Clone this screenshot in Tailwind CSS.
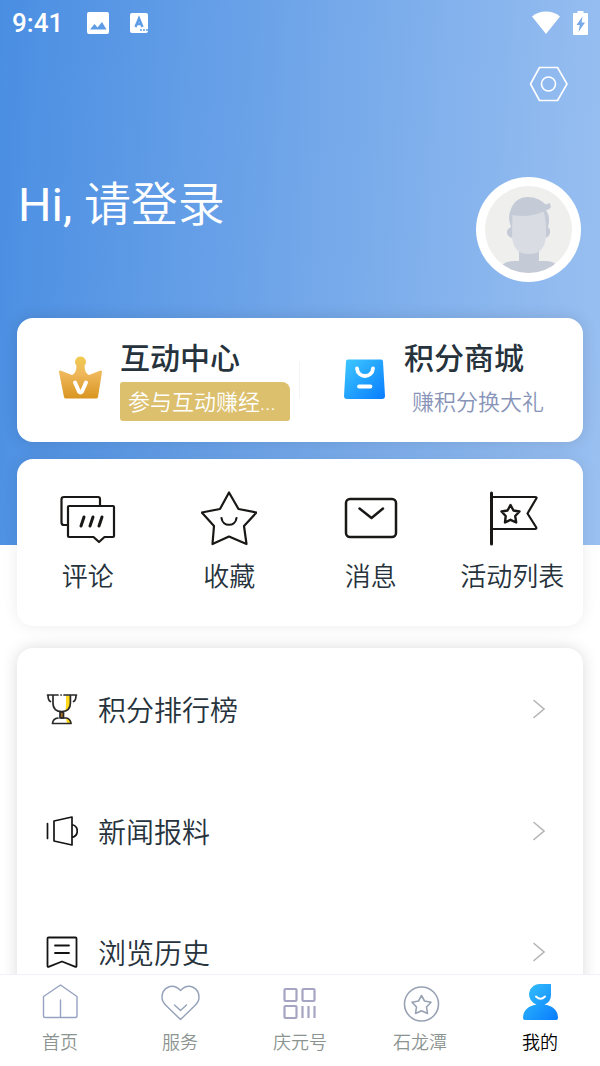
<!DOCTYPE html>
<html lang="zh-CN">
<head>
<meta charset="utf-8">
<meta name="viewport" content="width=device-width, initial-scale=1">
<title>我的</title>
<script src="https://cdn.jsdelivr.net/npm/@tailwindcss/browser@4"></script>
</head>
<body class="flex h-screen flex-col overflow-hidden bg-white font-[Roboto,'Noto_Sans_CJK_SC',sans-serif] font-[350] text-[#26323c]">
<main class="flex min-h-0 flex-1 flex-col overflow-hidden bg-[linear-gradient(94deg,#4a8ee2_0%,#9ac0f1_100%)] bg-[length:100%_545px] bg-no-repeat">
  <div class="flex h-[46px] shrink-0 items-center pl-3 pr-3 text-white">
    <span class="text-[26px] font-medium leading-8">9:41</span>
    <svg class="ml-6 h-[22px] w-[22px]" viewBox="0 0 22 22" fill="none"><rect width="22" height="22" rx="2" fill="#fff"/><path d="M3 17.500 7.500 12l3 3.500 4.500-5.500 4.500 7.500z" fill="#5f9ce6"/></svg>
    <svg class="ml-[21px] h-[22px] w-[19px]" viewBox="0 0 19 22"><rect y="1" width="18" height="20" rx="2" fill="#fff"/><path d="M5.500 15 9 6.500 12.500 15M6.800 12h4.400" fill="none" stroke="#5f9ce6" stroke-width="2.400"/><path d="M10 18h2m1 0h2m1 0h2" stroke="#5f9ce6" stroke-width="1.500"/></svg>
    <svg class="ml-auto h-6 w-[30px]" viewBox="0 0 30 24"><path d="M1 5.500Q7 .5 15 .5t14 5L15 23z" fill="#fff"/></svg>
    <svg class="ml-3 h-6 w-[15px]" viewBox="0 0 15 24"><path d="M4.500 0h6v2H14q1 0 1 1v20q0 1-1 1H1q-1 0-1-1V3q0-1 1-1h3.500z" fill="#fff"/><path d="M9.500 5.500 3.500 14h3.300L5.500 21 12 11.500H8.600z" fill="#78a9e9"/></svg>
  </div>
  <div class="flex h-[76px] shrink-0 items-center justify-end px-8">
    <button type="button" aria-label="设置" class="h-9 w-[39px]"><svg viewBox="0 0 39 36" fill="none" stroke="#fff" stroke-width="1.600" stroke-linejoin="round"><path d="M10.500 1.500h18L38 18l-9.500 16.500h-18L1.500 18z"/><circle cx="19.500" cy="18" r="7"/></svg></button>
  </div>
  <div class="mt-[55px] flex shrink-0 items-start justify-between pl-[18px] pr-[19px]">
    <a href="#login" class="text-[47px] leading-[56px] text-white"><span class="font-normal">Hi, </span>请登录</a>
    <svg class="h-[105px] w-[105px]" viewBox="0 0 105 105" role="img" aria-label="头像">
      <defs><clipPath id="face"><circle cx="52.500" cy="52.500" r="43.500"/></clipPath></defs>
      <circle cx="52.500" cy="52.500" r="52.500" fill="#fff"/><circle cx="52.500" cy="52.500" r="43.500" fill="#efefee"/>
      <g clip-path="url(#face)"><path d="M26 88q5-4 12-4h5V72h20v12h6q8 0 12 4v12H26z" fill="#c5cad7"/>
      <path d="M35 50q-4-10 0-18c3-8 9-12 17-12 7 0 13 3 17 7q2 1 4-1 2 0 1 2l1 1q-1 4-5 4 5 7 2 17c4 3 2 10-3 11H36c-6-1-7-9-1-11z" fill="#c5cad7"/>
      <path d="M36.500 38q17 3 31-3.500 3 8 2.500 24.500-1 18-17 18T36 59z" fill="#d9dde3"/></g>
    </svg>
  </div>
  <div class="mt-9 flex shrink-0 flex-col gap-[17px] px-[17px]">
    <section class="grid h-[124px] grid-cols-2 rounded-2xl bg-white shadow-[0_0_16px_rgba(0,0,0,0.12)]">
      <a href="#interact" class="flex items-center pl-[41px]">
        <svg class="mb-1 h-[46px] w-[46px] shrink-0" viewBox="0 0 46 46"><defs><linearGradient id="gold" x1="0" y1="0" x2="0" y2="1"><stop stop-color="#f0cb50"/><stop offset=".4" stop-color="#efb85b"/><stop offset="1" stop-color="#d99520"/></linearGradient></defs><path d="M22.500 1.500a5.500 5.500 0 0 1 4 9.200q0 7 4.500 9.300l11.500-4.500q1.500-.5 1.500 1.500l-4 25q-.2 1.500-2 1.500H8q-1.800 0-2-1.500L1 17q0-2 1.500-1.500L14 20q4.500-2.300 4.500-9.300a5.500 5.500 0 0 1 4-9.200z" fill="url(#gold)"/><path d="m17 27.500 4 9q1.500 2 3 0l4-9" fill="none" stroke="#fff" stroke-width="4" stroke-linecap="round" stroke-linejoin="round"/></svg>
        <span class="ml-4 flex min-w-0 flex-1 flex-col items-start gap-[5px] pt-0.5">
          <span class="text-[30px] font-medium leading-9">互动中心</span>
          <span class="h-[39px] w-[170px] max-w-full whitespace-nowrap rounded-[3px] rounded-tr-lg bg-[#dcc06e] px-2 text-[22px] leading-[41px] text-white">参与互动赚经...</span>
        </span>
        <span class="h-9 w-px bg-[#f3f3f8]"></span>
      </a>
      <a href="#mall" class="flex items-center pl-[43px]">
        <svg class="mb-0.5 h-[41px] w-[43px] shrink-0" viewBox="0 0 43 41"><defs><linearGradient id="blue" x1="0" y1="0" x2="1" y2="1"><stop stop-color="#3ec9ff"/><stop offset="1" stop-color="#087cff"/></linearGradient></defs><path d="M5 .5h33q2 0 2 2L42 37q0 3-3 3H4q-3 0-3-3L3 2.500q0-2 2-2z" fill="url(#blue)"/><path d="M14 9.500c1 10 15 10 16 0M16 27.500h11.500" fill="none" stroke="#fff" stroke-width="3.800" stroke-linecap="round"/></svg>
        <span class="ml-[18px] flex flex-col gap-[5px] pt-0.5">
          <span class="text-[30px] font-medium leading-9">积分商城</span>
          <span class="h-[39px] pl-2 text-[22px] leading-[41px] text-[#8794b8]">赚积分换大礼</span>
        </span>
      </a>
    </section>
    <section class="grid h-[167px] grid-cols-4 rounded-2xl bg-white text-center text-[26px] leading-8 shadow-[0_0_16px_rgba(0,0,0,0.08)]">
      <a href="#comments" class="flex flex-col items-center whitespace-nowrap pt-8"><svg class="mb-3.5 h-14 w-14" viewBox="0 0 56 56" fill="none" stroke="#191816" stroke-width="2.200" stroke-linejoin="round" stroke-linecap="round"><path d="M8 34H4q-2.500 0-2.500-2.500V8.500Q1.500 6 4 6h34q2 0 2 2v7"/><path d="M9 15h44q1 0 1 1v29q0 1-1 1h-8.500L39 51l-5.500-5H9q-1 0-1-1V16q0-1 1-1z"/><path d="m24 26-3 9m12-9-3 9m12-9-3 9" stroke-width="3"/></svg>评论</a>
      <a href="#favorites" class="flex flex-col items-center whitespace-nowrap pt-8"><svg class="mb-3.5 h-14 w-14" viewBox="0 0 56 56" fill="none" stroke="#191816" stroke-width="2.200" stroke-linejoin="round" stroke-linecap="round"><path d="m28 1.500 9.500 16.500 18 3.500L43 35l2.500 18L28 45.500 11.500 53 13 35 .8 21.500 19 18z"/><path d="M20.500 27c1 9 14 9 15 0"/></svg>收藏</a>
      <a href="#messages" class="flex flex-col items-center whitespace-nowrap pt-8"><svg class="mb-3.5 h-14 w-14" viewBox="0 0 56 56" fill="none" stroke="#191816" stroke-width="2.500" stroke-linejoin="round" stroke-linecap="round"><rect x="3" y="8" width="50" height="38" rx="4"/><path d="m16.500 17.500 12 9.500L40 17.500"/></svg>消息</a>
      <a href="#activities" class="flex flex-col items-center whitespace-nowrap pt-8"><svg class="mb-3.5 h-14 w-14" viewBox="0 0 56 56" fill="none" stroke="#191816" stroke-width="2.200" stroke-linejoin="round" stroke-linecap="round"><path d="M7.500 2v51" stroke-width="3"/><path d="M8 6h43q2.500 0 1 2L43.500 22.500 52 36q1 2-1 2H8"/><path d="m26.500 14 3 5.500 6 1-4.300 4.500 1 6.500-5.700-2.700-5.500 2.700.7-6.500-4.200-4.500 6-1z" stroke-width="2.400"/></svg>活动列表</a>
    </section>
  </div>
  <section class="mx-[17px] mt-[22px] flex h-[420px] shrink-0 flex-col rounded-t-2xl bg-white text-[28px] leading-9 shadow-[0_0_16px_rgba(0,0,0,0.14)]">
    <a href="#ranking" class="flex h-[122px] shrink-0 items-center pl-[29px] pr-[38px]"><svg class="mr-5 h-8 w-8" viewBox="0 0 32 32" fill="none" stroke="#282828" stroke-width="1.700" stroke-linecap="round" stroke-linejoin="round"><path d="M20 2.500h4.500V11q0 6-5.500 7.500 1-3 1-7.500z" fill="#ffd91a" stroke="none"/><path d="M14 19h3.500v6H14z" fill="#a76f20"/><path d="M20 25.500q5 0 5.500 4.500H21z" fill="#ffd91a" stroke="none"/><path d="M1.500 2H12m3 0h.2M18 2h12.500M7 2.500V10c0 6 3.500 8.500 8.700 8.500s8.700-2.500 8.700-8.500V2.500M2 2q0 5.500 2.500 6.500M30 2q0 5.500-2.500 6.500M12 25q-5 .5-5.500 5.500H25q-.5-4.500-4.500-5.500h-5"/></svg><span class="flex-1 pt-1.5">积分排行榜</span><svg class="h-5 w-3" viewBox="0 0 12 20" fill="none" stroke="#b5b5b5" stroke-width="1.600" stroke-linecap="round"><path d="m1 1.500 10 8.500L1 18.500"/></svg></a>
    <a href="#report" class="flex h-[121px] shrink-0 items-center pl-[29px] pr-[38px]"><svg class="mr-5 h-8 w-8" viewBox="0 0 32 32" fill="none" stroke="#141414" stroke-width="1.700" stroke-linecap="round" stroke-linejoin="round"><path d="M1.500 8.500v15M8 6l18-4v28L8 26zM26 9.500c7 2 7 11 0 13"/></svg><span class="flex-1 pt-1.5">新闻报料</span><svg class="h-5 w-3" viewBox="0 0 12 20" fill="none" stroke="#b5b5b5" stroke-width="1.600" stroke-linecap="round"><path d="m1 1.500 10 8.500L1 18.500"/></svg></a>
    <a href="#history" class="flex h-[122px] shrink-0 items-center pl-[29px] pr-[38px]"><svg class="mr-5 h-8 w-8" viewBox="0 0 32 32" fill="none" stroke="#141414" stroke-width="1.800" stroke-linecap="round" stroke-linejoin="round"><path d="M2.500 1.500h27q1 0 1 1V30q0 1-1 .8L16 25.500 2.500 30.800q-1 .2-1-.8V2.500q0-1 1-1zM9 9.500h14M9 17h14"/></svg><span class="flex-1 pt-1.5">浏览历史</span><svg class="h-5 w-3" viewBox="0 0 12 20" fill="none" stroke="#b5b5b5" stroke-width="1.600" stroke-linecap="round"><path d="m1 1.500 10 8.500L1 18.500"/></svg></a>
  </section>
</main>
<nav aria-label="主导航" class="z-10 grid h-[92px] shrink-0 grid-cols-5 border-t border-[#eef1f6] bg-white text-[18px] leading-6 text-[#8b9490]">
  <a href="#home" class="flex flex-col items-center gap-[5px] pt-[7px]"><svg class="h-11 w-10" viewBox="0 0 40 44" fill="none" stroke="#97a2c1" stroke-width="1.400" stroke-linejoin="round" stroke-linecap="round"><path d="M3.500 14.500 20.500 3 37 14.500V34q0 1.500-1.500 1.500H5q-1.500 0-1.500-1.500zM20.500 18v17.500"/></svg><span>首页</span></a>
  <a href="#services" class="flex flex-col items-center gap-[5px] pt-[7px]"><svg class="h-11 w-10" viewBox="0 0 40 44" fill="none" stroke="#94a1b8" stroke-width="1.400" stroke-linejoin="round" stroke-linecap="round"><path d="M20.500 8.500C12 0 2 6 2 15.500q0 4 4 8L20.500 37.500 35 23.500q4-4 4-8C39 6 29 0 20.500 8.500zM14.500 23l6 5.500 6-5.500"/></svg><span>服务</span></a>
  <a href="#qingyuan" class="flex flex-col items-center gap-[5px] pt-[7px]"><svg class="h-11 w-10" viewBox="0 0 40 44" fill="none" stroke="#a5a4c2" stroke-width="2.200"><rect x="4.500" y="7" width="12" height="12" rx="1"/><rect x="22.500" y="7" width="12" height="12" rx="1"/><rect x="4.500" y="24" width="12" height="12" rx="1"/><path d="M22.500 24v12m6-12v12m6-12v12"/></svg><span>庆元号</span></a>
  <a href="#shilongtan" class="flex flex-col items-center gap-[5px] pt-[7px]"><svg class="h-11 w-10" viewBox="0 0 40 44" fill="none" stroke="#98a2b3" stroke-width="1.600" stroke-linejoin="round"><circle cx="21.500" cy="22" r="17"/><path d="m21.500 13.500 3 5.500 6.500 1.200-4.500 4.800 1 6.500-6-2.800-6 2.800 1-6.500-4.500-4.800 6.500-1.200z"/></svg><span>石龙潭</span></a>
  <a href="#me" aria-current="page" class="flex flex-col items-center gap-[5px] pt-[7px] text-black"><svg class="h-11 w-10" viewBox="0 0 40 44"><defs><linearGradient id="user" x1="0" y1="0" x2="1" y2="1"><stop stop-color="#36c3fa"/><stop offset="1" stop-color="#087cff"/></linearGradient></defs><path d="M20.500 2H31v10.500a10.500 10.500 0 0 1-6.500 10Q38 25 38 36q0 2-2 2H5q-2 0-2-2 0-11 13.500-13.500A10.500 10.500 0 0 1 20.500 2z" fill="url(#user)"/><path d="M16 14.500q4.500 4.500 9 0" fill="none" stroke="#fff" stroke-width="2" stroke-linecap="round"/></svg><span>我的</span></a>
</nav>
</body>
</html>
